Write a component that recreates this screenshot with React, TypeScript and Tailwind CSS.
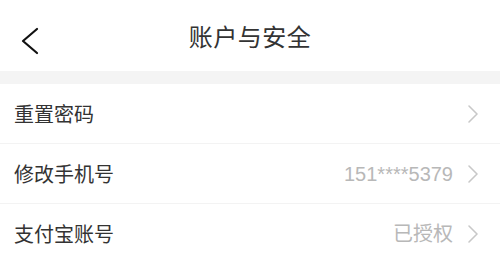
import React from "react";

const rows = [
  { label: "重置密码", value: "" },
  { label: "修改手机号", value: "151****5379" },
  { label: "支付宝账号", value: "已授权" },
];

function Chevron() {
  return (
    <svg width="12" height="20" viewBox="0 0 12 20" className="shrink-0">
      <path d="M2 2 L10 10 L2 18" fill="none" stroke="#c8c8c8" strokeWidth="1.6" strokeLinecap="round" strokeLinejoin="round" />
    </svg>
  );
}

export default function App() {
  return (
    <div
      className="w-[500px] h-[261px] overflow-hidden bg-white"
      style={{ fontFamily: '"Noto Sans CJK SC", "Liberation Sans", sans-serif' }}
    >
      <header className="relative h-[71px] flex items-center justify-center">
        <button className="absolute left-[18px] top-[25px] w-[24px] h-[32px] flex items-center justify-center">
          <svg width="20" height="28" viewBox="0 0 20 28">
            <path d="M17 2 L3 14 L17 26" fill="none" stroke="#111" strokeWidth="2.2" strokeLinecap="round" strokeLinejoin="round" />
          </svg>
        </button>
        <h1 className="text-[24px] leading-none text-[#333] tracking-[0.5px]">账户与安全</h1>
      </header>
      <div className="h-[13px] bg-[#f4f4f4]" />
      <ul>
        {rows.map((r, i) => (
          <li
            key={r.label}
            className={`h-[60px] flex items-center pl-[14px] pr-[21px] ${i < rows.length - 1 ? "border-b border-[#f3f3f3]" : ""}`}
          >
            <span className="text-[20px] text-[#333] flex-1">{r.label}</span>
            {r.value && (
              <span className="text-[20px] text-[#b8b8b8] mr-[14px]" style={{ fontFamily: '"Liberation Sans", "Noto Sans CJK SC", sans-serif' }}>
                {r.value}
              </span>
            )}
            <Chevron />
          </li>
        ))}
      </ul>
    </div>
  );
}
